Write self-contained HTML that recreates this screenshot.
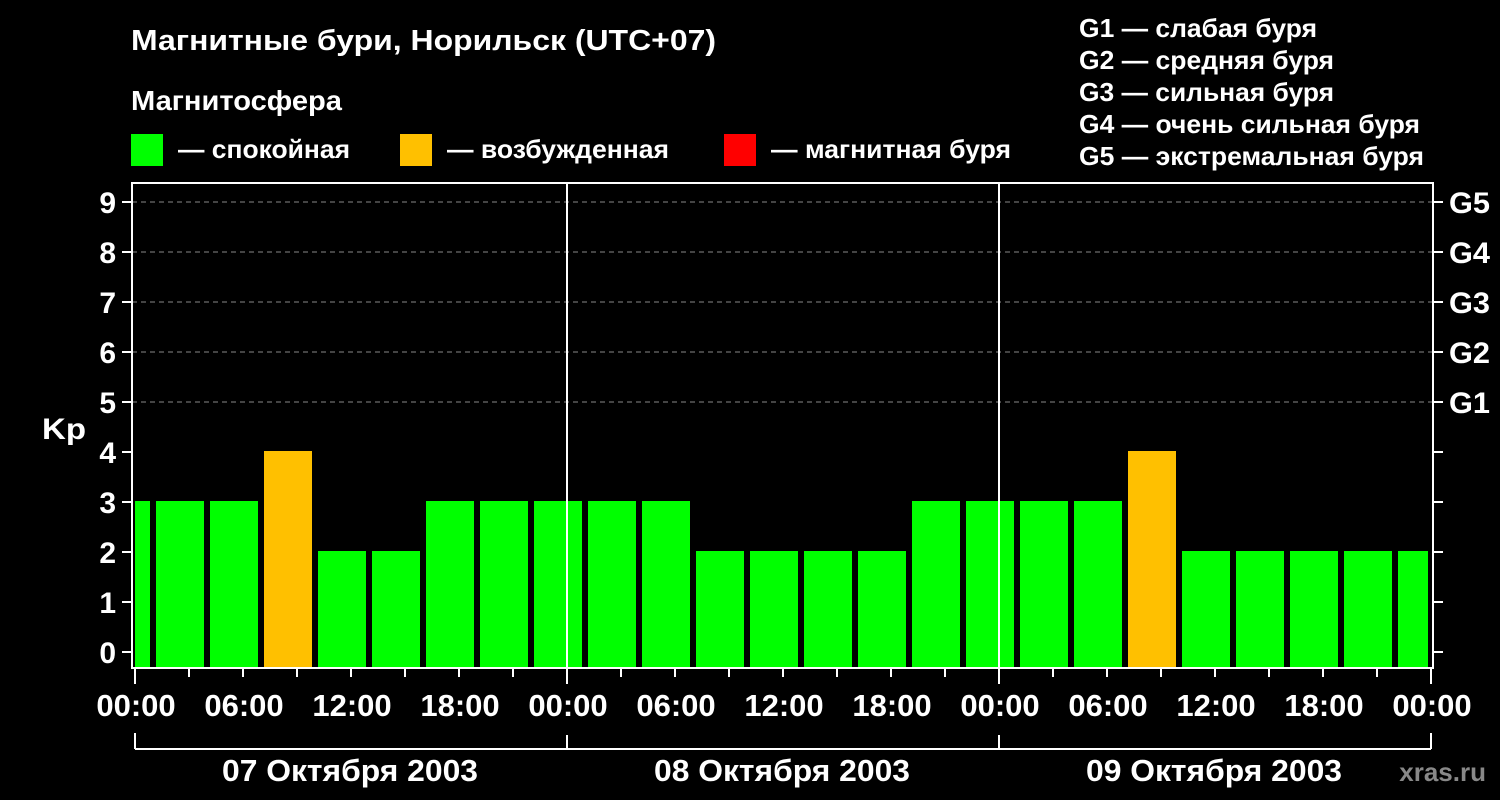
<!DOCTYPE html>
<html><head><meta charset="utf-8"><style>
html,body{margin:0;padding:0;background:#000;}
svg{display:block;font-family:"Liberation Sans",sans-serif;font-weight:bold;}
</style></head><body>
<svg width="1500" height="800" viewBox="0 0 1500 800" xmlns="http://www.w3.org/2000/svg">
<rect width="1500" height="800" fill="#000"/>
<g fill="#fff" font-size="26">
<text x="131" y="50" font-size="29" textLength="585" lengthAdjust="spacingAndGlyphs">Магнитные бури, Норильск (UTC+07)</text>
<text x="131" y="110" font-size="28" textLength="211" lengthAdjust="spacingAndGlyphs">Магнитосфера</text>
<text x="178" y="158" textLength="172" lengthAdjust="spacingAndGlyphs">— спокойная</text>
<text x="447" y="158" textLength="222" lengthAdjust="spacingAndGlyphs">— возбужденная</text>
<text x="771" y="158" textLength="240" lengthAdjust="spacingAndGlyphs">— магнитная буря</text>
<text x="1079" y="37" textLength="238" lengthAdjust="spacingAndGlyphs">G1 — слабая буря</text>
<text x="1079" y="69" textLength="255" lengthAdjust="spacingAndGlyphs">G2 — средняя буря</text>
<text x="1079" y="101" textLength="255" lengthAdjust="spacingAndGlyphs">G3 — сильная буря</text>
<text x="1079" y="133" textLength="341" lengthAdjust="spacingAndGlyphs">G4 — очень сильная буря</text>
<text x="1079" y="165" textLength="345" lengthAdjust="spacingAndGlyphs">G5 — экстремальная буря</text>
</g>
<rect x="131" y="134" width="32" height="32" fill="#00ff00"/>
<rect x="400" y="134" width="32" height="32" fill="#ffc000"/>
<rect x="724" y="134" width="32" height="32" fill="#ff0000"/>
<g stroke="#888" stroke-width="1" stroke-dasharray="5,4">
<line x1="132" y1="202" x2="1433" y2="202"/>
<line x1="132" y1="252" x2="1433" y2="252"/>
<line x1="132" y1="302" x2="1433" y2="302"/>
<line x1="132" y1="352" x2="1433" y2="352"/>
<line x1="132" y1="402" x2="1433" y2="402"/>
</g>
<g>
<rect x="135" y="501" width="15" height="166" fill="#00ff00"/>
<rect x="156" y="501" width="48" height="166" fill="#00ff00"/>
<rect x="210" y="501" width="48" height="166" fill="#00ff00"/>
<rect x="264" y="451" width="48" height="216" fill="#ffc000"/>
<rect x="318" y="551" width="48" height="116" fill="#00ff00"/>
<rect x="372" y="551" width="48" height="116" fill="#00ff00"/>
<rect x="426" y="501" width="48" height="166" fill="#00ff00"/>
<rect x="480" y="501" width="48" height="166" fill="#00ff00"/>
<rect x="534" y="501" width="48" height="166" fill="#00ff00"/>
<rect x="588" y="501" width="48" height="166" fill="#00ff00"/>
<rect x="642" y="501" width="48" height="166" fill="#00ff00"/>
<rect x="696" y="551" width="48" height="116" fill="#00ff00"/>
<rect x="750" y="551" width="48" height="116" fill="#00ff00"/>
<rect x="804" y="551" width="48" height="116" fill="#00ff00"/>
<rect x="858" y="551" width="48" height="116" fill="#00ff00"/>
<rect x="912" y="501" width="48" height="166" fill="#00ff00"/>
<rect x="966" y="501" width="48" height="166" fill="#00ff00"/>
<rect x="1020" y="501" width="48" height="166" fill="#00ff00"/>
<rect x="1074" y="501" width="48" height="166" fill="#00ff00"/>
<rect x="1128" y="451" width="48" height="216" fill="#ffc000"/>
<rect x="1182" y="551" width="48" height="116" fill="#00ff00"/>
<rect x="1236" y="551" width="48" height="116" fill="#00ff00"/>
<rect x="1290" y="551" width="48" height="116" fill="#00ff00"/>
<rect x="1344" y="551" width="48" height="116" fill="#00ff00"/>
<rect x="1398" y="551" width="30" height="116" fill="#00ff00"/>
</g>
<g stroke="#fff" stroke-width="2" fill="none">
<rect x="132" y="183" width="1301" height="485"/>
<line x1="567" y1="183" x2="567" y2="668"/>
<line x1="999" y1="183" x2="999" y2="668"/>
<path d="M122 202h10M122 252h10M122 302h10M122 352h10M122 402h10M122 452h10M122 502h10M122 552h10M122 602h10M122 652h10"/>
<path d="M1433 202h10M1433 252h10M1433 302h10M1433 352h10M1433 402h10M1433 452h10M1433 502h10M1433 552h10M1433 602h10M1433 652h10"/>
<path d="M135 668v16M189 668v9M243 668v9M297 668v9M351 668v9M405 668v9M459 668v9M513 668v9M567 668v16M621 668v9M675 668v9M729 668v9M783 668v9M837 668v9M891 668v9M945 668v9M999 668v16M1053 668v9M1107 668v9M1161 668v9M1215 668v9M1269 668v9M1323 668v9M1377 668v9M1431 668v16"/>
<path d="M135 733v16M135 749H1431M567 735v14M999 735v14M1431 733v16"/>
</g>
<g fill="#fff" font-size="30" text-anchor="end">
<text x="116" y="213">9</text><text x="116" y="263">8</text><text x="116" y="313">7</text><text x="116" y="363">6</text><text x="116" y="413">5</text><text x="116" y="463">4</text><text x="116" y="513">3</text><text x="116" y="563">2</text><text x="116" y="613">1</text><text x="116" y="663">0</text>
</g>
<text x="42" y="439" fill="#fff" font-size="30" textLength="44" lengthAdjust="spacingAndGlyphs">Kp</text>
<g fill="#fff" font-size="30">
<text x="1449" y="213" textLength="41" lengthAdjust="spacingAndGlyphs">G5</text><text x="1449" y="263" textLength="41" lengthAdjust="spacingAndGlyphs">G4</text><text x="1449" y="313" textLength="41" lengthAdjust="spacingAndGlyphs">G3</text><text x="1449" y="363" textLength="41" lengthAdjust="spacingAndGlyphs">G2</text><text x="1449" y="413" textLength="41" lengthAdjust="spacingAndGlyphs">G1</text>
</g>
<g fill="#fff" font-size="31" text-anchor="middle">
<text x="136" y="716">00:00</text><text x="244" y="716">06:00</text><text x="352" y="716">12:00</text><text x="460" y="716">18:00</text><text x="568" y="716">00:00</text><text x="676" y="716">06:00</text><text x="784" y="716">12:00</text><text x="892" y="716">18:00</text><text x="1000" y="716">00:00</text><text x="1108" y="716">06:00</text><text x="1216" y="716">12:00</text><text x="1324" y="716">18:00</text><text x="1432" y="716">00:00</text>
</g>
<g fill="#fff" font-size="31">
<text x="222" y="781" textLength="256" lengthAdjust="spacingAndGlyphs">07 Октября 2003</text><text x="654" y="781" textLength="256" lengthAdjust="spacingAndGlyphs">08 Октября 2003</text><text x="1086" y="781" textLength="256" lengthAdjust="spacingAndGlyphs">09 Октября 2003</text>
</g>
<text x="1486" y="781" fill="#888" font-size="26" text-anchor="end">xras.ru</text>
</svg>
</body></html>
